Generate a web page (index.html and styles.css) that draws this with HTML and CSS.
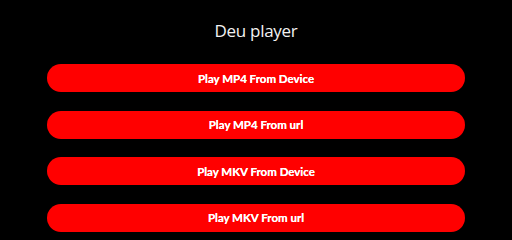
FILE: index.html
```html
<!DOCTYPE html>
<html lang="en">
<head>
<meta charset="utf-8">
<title>Deu player</title>
<link rel="stylesheet" href="styles.css">
</head>
<body>
<main class="app">
  <h1 class="title">Deu player</h1>
  <div class="actions">
    <button class="btn">Play MP4 From Device</button>
    <button class="btn">Play MP4 From url</button>
    <button class="btn">Play MKV From Device</button>
    <button class="btn">Play MKV From url</button>
  </div>
</main>
</body>
</html>
```
FILE: styles.css
```css
html, body {
  margin: 0;
  padding: 0;
  background: #000;
  height: 100%;
  overflow: hidden;
}
.app {
  display: flex;
  flex-direction: column;
  align-items: stretch;
  padding: 0 47px;
  font-family: "Lato", "Open Sans", sans-serif;
}
.title {
  margin: 0;
  height: 64px;
  display: flex;
  align-items: center;
  justify-content: center;
  padding-bottom: 4px;
  box-sizing: border-box;
  color: #f2f2f2;
  font-family: "Open Sans", "Noto Sans", sans-serif;
  font-weight: 400;
  font-size: 17px;
  letter-spacing: -0.3px;
}
.actions {
  display: flex;
  flex-direction: column;
  gap: 18.67px;
}
.btn {
  height: 28px;
  border: none;
  border-radius: 14px;
  background: #ff0000;
  color: #fff;
  font-family: "Lato", "Open Sans", sans-serif;
  font-weight: 700;
  font-size: 11.5px;
  padding: 0;
  text-shadow: 0 0 0.3px #fff;
}
```
